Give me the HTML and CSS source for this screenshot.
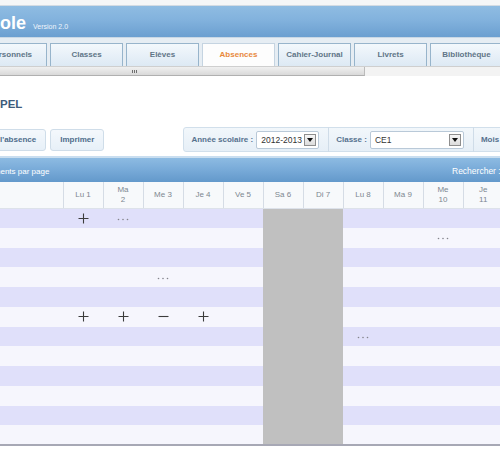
FILE: index.html
```html
<!DOCTYPE html>
<html lang="fr">
<head>
<meta charset="utf-8">
<title>École - Appel</title>
<link rel="stylesheet" href="styles.css">
</head>
<body>
<div class="app">
  <div class="topstrip"></div>
  <header class="banner">
    <span class="brand">École</span>
    <span class="version">Version 2.0</span>
  </header>
  <div class="subbar"></div>
  <nav class="tabs">
    <a class="tab">Personnels</a>
    <a class="tab">Classes</a>
    <a class="tab">Elèves</a>
    <a class="tab active">Absences</a>
    <a class="tab">Cahier-Journal</a>
    <a class="tab">Livrets</a>
    <a class="tab">Bibliothèque</a>
  </nav>
  <div class="hscroll"><div class="thumb"><span class="grip"><i></i><i></i><i></i></span></div></div>

  <main class="content">
    <h1 class="title">APPEL</h1>

    <div class="toolbar">
      <button class="btn first">Saisir l'absence</button>
      <button class="btn">Imprimer</button>
      <div class="filters">
        <label class="flabel">Année scolaire :</label>
        <div class="select year"><span>2012-2013</span><span class="dd"><svg width="6" height="4" viewBox="0 0 6 4"><path d="M0 0h6L3 4z" fill="#111"/></svg></span></div>
        <span class="sep"></span>
        <label class="flabel">Classe :</label>
        <div class="select cls"><span>CE1</span><span class="dd"><svg width="6" height="4" viewBox="0 0 6 4"><path d="M0 0h6L3 4z" fill="#111"/></svg></span></div>
        <span class="sep"></span>
        <label class="flabel">Mois :</label>
        <div class="select month"><span>Octobre</span></div>
      </div>
    </div>

    <section class="grid">
      <div class="gridbar">
        <span class="perpage">10 éléments par page</span>
        <span class="search">Rechercher :</span>
      </div>
      <table class="cal">
        <thead>
          <tr>
            <th class="name"></th>
            <th>Lu 1</th><th>Ma<br>2</th><th>Me 3</th><th>Je 4</th><th>Ve 5</th><th>Sa 6</th><th>Di 7</th><th>Lu 8</th><th>Ma 9</th><th>Me<br>10</th><th>Je<br>11</th>
          </tr>
        </thead>
        <tbody>
          <tr>
            <td></td>
            <td><svg class="mk" width="11" height="11" viewBox="0 0 11 11"><path d="M5.5 0.5v10M0.5 5.5h10"/></svg></td>
            <td><svg class="dots" width="12" height="3" viewBox="0 0 12 3"><circle cx="1.5" cy="1.5" r="0.8"/><circle cx="6" cy="1.5" r="0.8"/><circle cx="10.5" cy="1.5" r="0.8"/></svg></td>
            <td></td><td></td><td></td><td class="we"></td><td class="we"></td><td></td><td></td><td></td><td></td>
          </tr>
          <tr>
            <td></td><td></td><td></td><td></td><td></td><td></td><td class="we"></td><td class="we"></td><td></td><td></td>
            <td><svg class="dots" width="12" height="3" viewBox="0 0 12 3"><circle cx="1.5" cy="1.5" r="0.8"/><circle cx="6" cy="1.5" r="0.8"/><circle cx="10.5" cy="1.5" r="0.8"/></svg></td>
            <td></td>
          </tr>
          <tr>
            <td></td><td></td><td></td><td></td><td></td><td></td><td class="we"></td><td class="we"></td><td></td><td></td><td></td><td></td>
          </tr>
          <tr>
            <td></td><td></td><td></td>
            <td><svg class="dots" width="12" height="3" viewBox="0 0 12 3"><circle cx="1.5" cy="1.5" r="0.8"/><circle cx="6" cy="1.5" r="0.8"/><circle cx="10.5" cy="1.5" r="0.8"/></svg></td>
            <td></td><td></td><td class="we"></td><td class="we"></td><td></td><td></td><td></td><td></td>
          </tr>
          <tr>
            <td></td><td></td><td></td><td></td><td></td><td></td><td class="we"></td><td class="we"></td><td></td><td></td><td></td><td></td>
          </tr>
          <tr>
            <td></td>
            <td><svg class="mk" width="11" height="11" viewBox="0 0 11 11"><path d="M5.5 0.5v10M0.5 5.5h10"/></svg></td>
            <td><svg class="mk" width="11" height="11" viewBox="0 0 11 11"><path d="M5.5 0.5v10M0.5 5.5h10"/></svg></td>
            <td><svg class="mk" width="11" height="11" viewBox="0 0 11 11"><path d="M0.5 5.5h10"/></svg></td>
            <td><svg class="mk" width="11" height="11" viewBox="0 0 11 11"><path d="M5.5 0.5v10M0.5 5.5h10"/></svg></td>
            <td></td><td class="we"></td><td class="we"></td><td></td><td></td><td></td><td></td>
          </tr>
          <tr>
            <td></td><td></td><td></td><td></td><td></td><td></td><td class="we"></td><td class="we"></td>
            <td><svg class="dots" width="12" height="3" viewBox="0 0 12 3"><circle cx="1.5" cy="1.5" r="0.8"/><circle cx="6" cy="1.5" r="0.8"/><circle cx="10.5" cy="1.5" r="0.8"/></svg></td>
            <td></td><td></td><td></td>
          </tr>
          <tr>
            <td></td><td></td><td></td><td></td><td></td><td></td><td class="we"></td><td class="we"></td><td></td><td></td><td></td><td></td>
          </tr>
          <tr>
            <td></td><td></td><td></td><td></td><td></td><td></td><td class="we"></td><td class="we"></td><td></td><td></td><td></td><td></td>
          </tr>
          <tr>
            <td></td><td></td><td></td><td></td><td></td><td></td><td class="we"></td><td class="we"></td><td></td><td></td><td></td><td></td>
          </tr>
          <tr>
            <td></td><td></td><td></td><td></td><td></td><td></td><td class="we"></td><td class="we"></td><td></td><td></td><td></td><td></td>
          </tr>
          <tr>
            <td></td><td></td><td></td><td></td><td></td><td></td><td class="we"></td><td class="we"></td><td></td><td></td><td></td><td></td>
          </tr>
        </tbody>
      </table>
    </section>
  </main>
</div>
</body>
</html>
```

FILE: styles.css
```css
* { box-sizing: border-box; }

html, body {
  margin: 0;
  padding: 0;
  width: 500px;
  height: 450px;
  overflow: hidden;
  background: #ffffff;
  font-family: "Liberation Sans", Arial, sans-serif;
}

.app {
  width: 500px;
  overflow: hidden;
}

.topstrip {
  height: 6px;
  background: #f5f6f7;
  border-bottom: 1px solid #d3dbe3;
}

.banner {
  height: 31px;
  padding-top: 8px;
  display: flex;
  align-items: baseline;
  background: linear-gradient(#8fbce2 0%, #82b2dd 45%, #6b9fd0 100%);
  color: #ffffff;
  white-space: nowrap;
}

.brand {
  font-size: 18px;
  font-weight: bold;
  line-height: 18px;
  margin-left: -22px;
}

.version {
  font-size: 7px;
  margin-left: 7px;
  color: #eef5fc;
}

.subbar {
  height: 6px;
  background: #e6edf3;
  border-top: 1px solid #c9d8e5;
}

.tabs {
  display: flex;
  gap: 3px;
  height: 23px;
  margin-left: -26px;
  background: #e6edf3;
}

.tab {
  flex: 0 0 73px;
  height: 23px;
  border: 1px solid #97b4cb;
  border-bottom: none;
  background: linear-gradient(#f3f8fc, #dde9f4);
  color: #5f7587;
  font-size: 8px;
  font-weight: bold;
  line-height: 22px;
  text-align: center;
  white-space: nowrap;
}

.tab.active {
  background: #fdfdfd;
  color: #e8883c;
  border-color: #c5d4e1;
}

.hscroll {
  height: 10px;
  background: #f3f3f3;
  border-top: 1px solid #cfcfcf;
}

.thumb {
  width: 460px;
  height: 9px;
  margin-left: -95px;
  background: linear-gradient(#f0f0f0, #d9d9d9);
  border-bottom: 1px solid #b0b0b0;
  border-right: 1px solid #bbbbbb;
  display: flex;
  justify-content: center;
  align-items: center;
}

.grip {
  display: flex;
  gap: 1px;
}

.grip i {
  width: 1px;
  height: 3px;
  background: #6f6f6f;
}

.content {
  padding: 0;
}

.title {
  margin: 21px 0 0 -16px;
  font-size: 11.5px;
  line-height: 14px;
  font-weight: bold;
  color: #3e5c7c;
}

.toolbar {
  display: flex;
  align-items: center;
  height: 25px;
  margin-top: 16px;
  white-space: nowrap;
}

.btn {
  height: 22px;
  padding: 0 9px;
  border: 1px solid #cfdde9;
  border-radius: 3px;
  background: linear-gradient(#f4f8fc, #e7f0f8);
  color: #4f6d8c;
  font-family: "Liberation Sans", Arial, sans-serif;
  font-size: 8px;
  font-weight: bold;
  flex: 0 0 auto;
}

.btn.first {
  margin-left: -34px;
}

.btn + .btn {
  margin-left: 4px;
}

.filters {
  flex: 0 0 auto;
  margin-left: 79px;
  height: 25px;
  display: flex;
  align-items: center;
  padding-left: 7px;
  background: linear-gradient(#f2f7fb, #e6eff7);
  border: 1px solid #d1dfeb;
  border-radius: 3px 0 0 3px;
}

.flabel {
  font-size: 8px;
  font-weight: bold;
  color: #56718e;
}

.select {
  height: 18px;
  margin-left: 3px;
  display: flex;
  align-items: center;
  justify-content: space-between;
  padding: 0 2px 0 4px;
  background: #ffffff;
  border: 1px solid #b9c9d8;
  border-radius: 2px;
  font-size: 8.5px;
  color: #333333;
}

.select.year { width: 63px; }
.select.cls { width: 94px; }
.select.month { width: 80px; }

.dd {
  width: 12px;
  height: 12px;
  border: 1px solid #8e8e8e;
  background: linear-gradient(#f6f6f6, #dcdcdc);
  display: flex;
  align-items: center;
  justify-content: center;
}

.sep {
  width: 1px;
  height: 25px;
  background: #cfdce8;
  margin: 0 7px 0 9px;
}

.grid {
  margin-top: 4px;
}

.gridbar {
  height: 26px;
  display: flex;
  align-items: center;
  justify-content: space-between;
  border-top: 2px solid #c9def0;
  background: linear-gradient(#8dbbe2 0%, #78aad8 50%, #6399cb 100%);
  color: #ffffff;
  font-size: 8px;
  white-space: nowrap;
}

.perpage {
  margin-left: -28px;
  margin-top: 2px;
}

.search {
  margin-right: -4px;
  margin-top: 2px;
  font-size: 8.5px;
  width: 52px;
}

.cal {
  width: 503px;
  table-layout: fixed;
  border-collapse: collapse;
  border-bottom: 2px solid #a7a8b5;
}

.cal th {
  height: 26px;
  padding: 0;
  background: #f7f9fb;
  border-left: 1px solid #d5dce5;
  border-bottom: 1px solid #dde2ea;
  color: #7d8790;
  font-size: 8px;
  font-weight: normal;
  line-height: 9.5px;
  text-align: center;
  vertical-align: middle;
}

.cal th.name {
  width: 63px;
  border-left: none;
}

.cal tbody tr {
  height: 19.75px;
}

.cal td {
  height: 19.75px;
  padding: 0;
  text-align: center;
  vertical-align: middle;
  line-height: 0;
}

.cal tbody tr:nth-child(odd) td { background: #e0e0fa; }
.cal tbody tr:nth-child(even) td { background: #f6f6fd; }
.cal tbody tr td.we { background: #c0c0c0; }

.mk path {
  stroke: #3c3c3c;
  stroke-width: 1.1;
  fill: none;
}

.dots circle {
  fill: #84848c;
}
```
